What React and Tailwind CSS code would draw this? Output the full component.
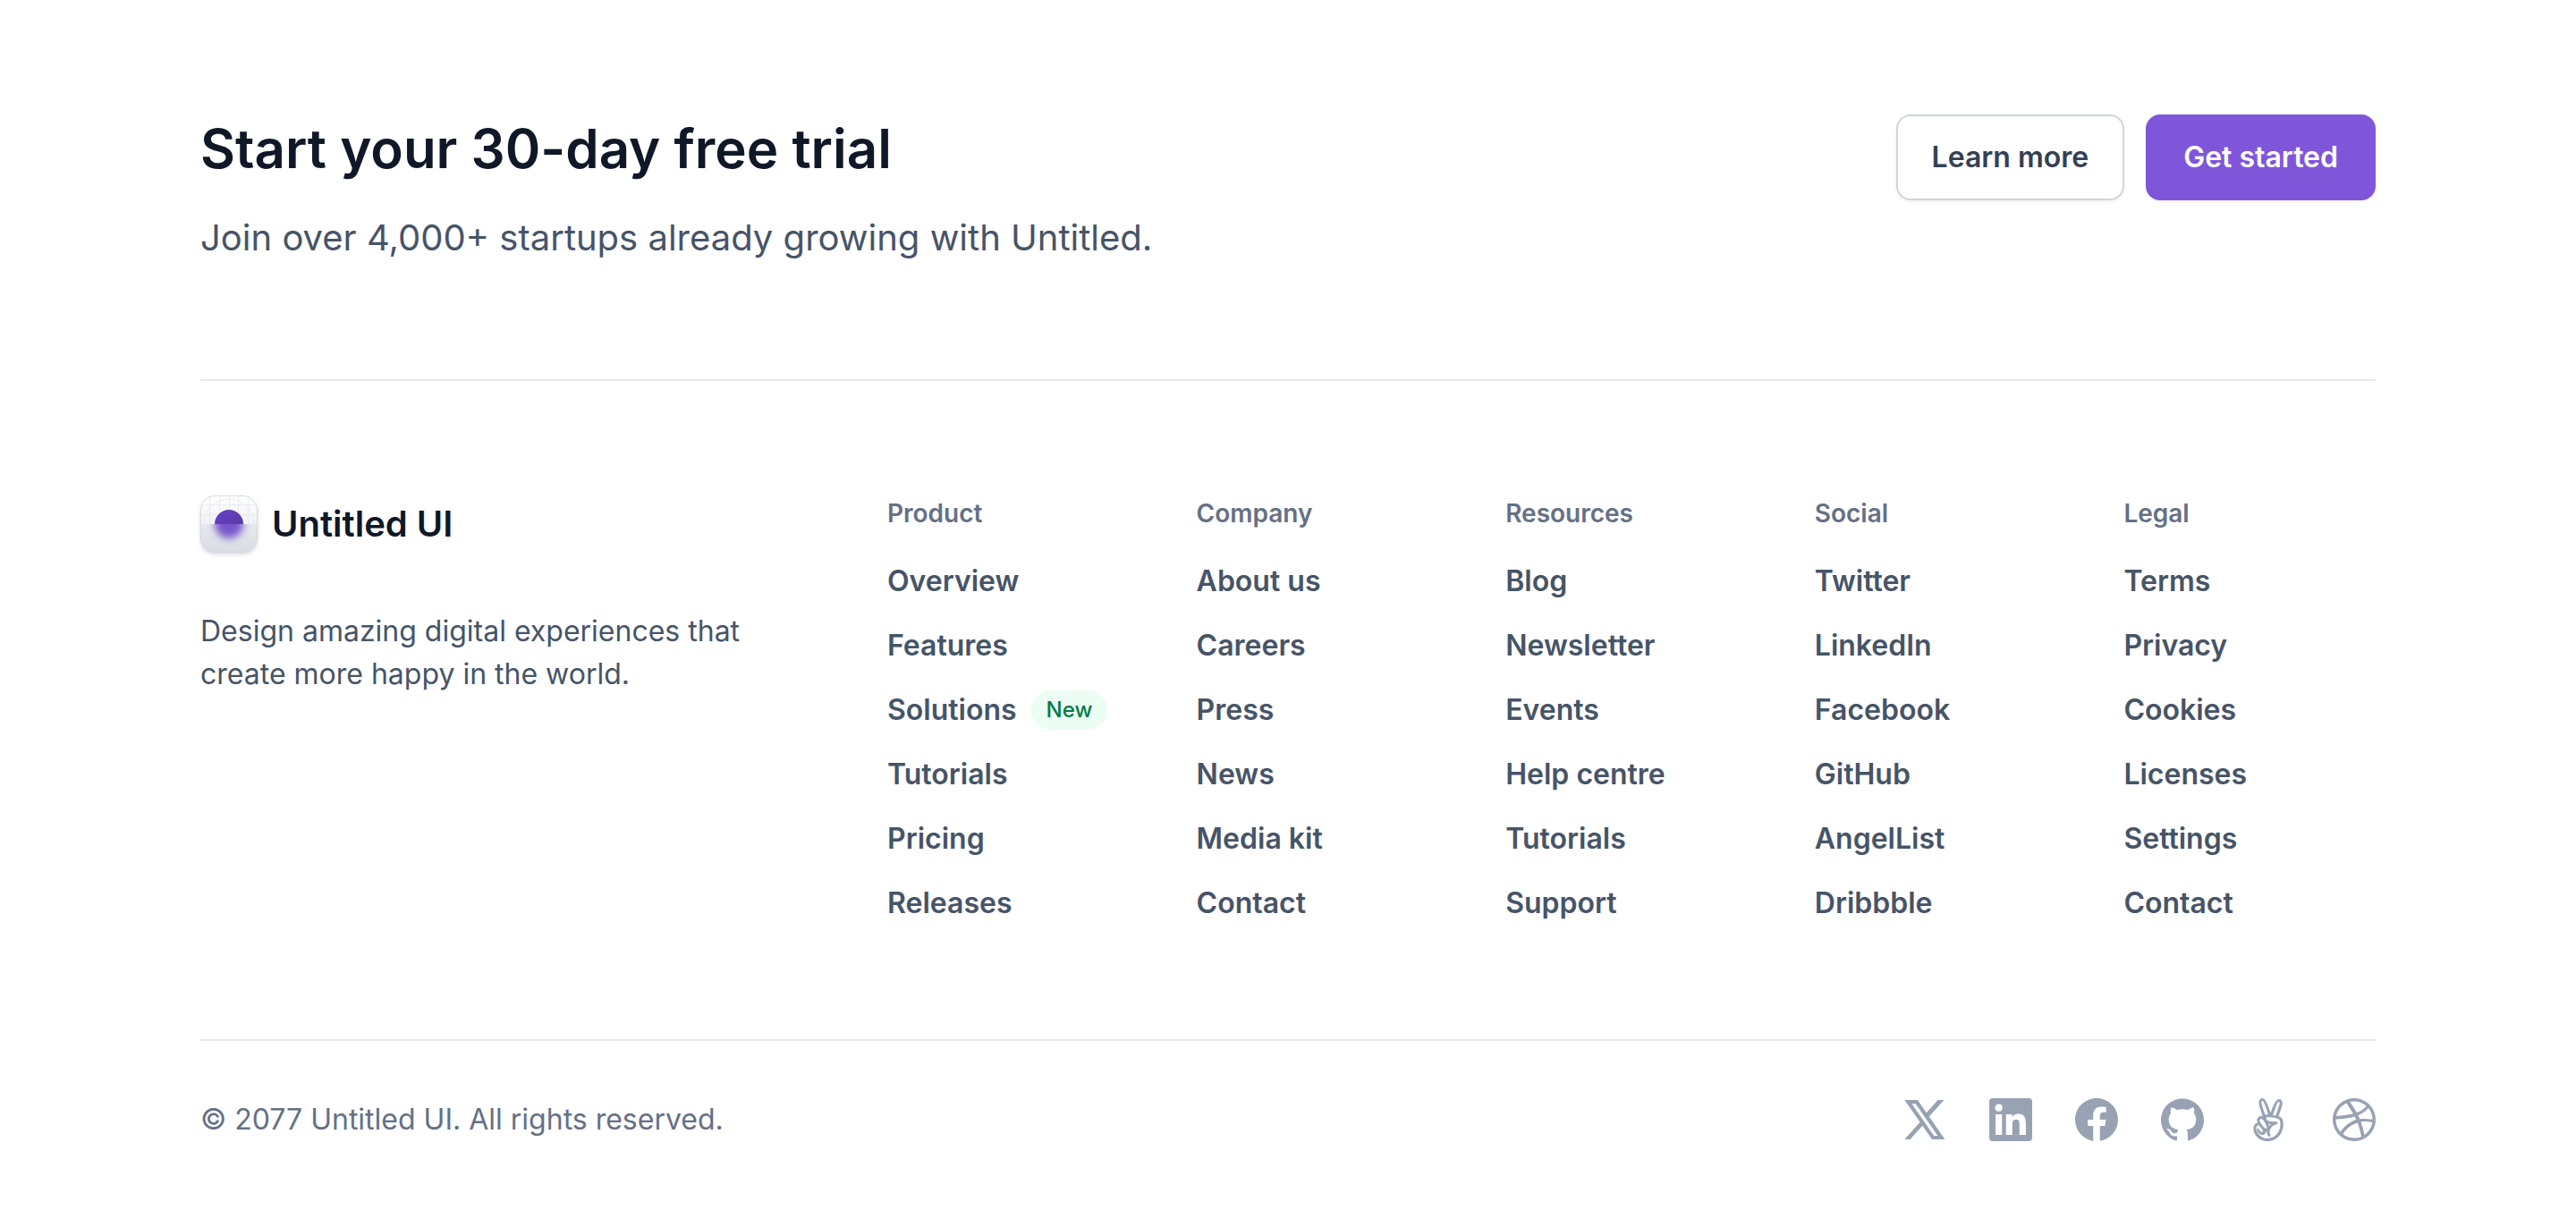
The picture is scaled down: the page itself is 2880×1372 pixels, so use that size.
import { FaAngellist } from "react-icons/fa";
import { SiGithub, SiDribbble } from "react-icons/si";

const columns = [
  { title: "Product", links: ["Overview", "Features", "Solutions", "Tutorials", "Pricing", "Releases"] },
  { title: "Company", links: ["About us", "Careers", "Press", "News", "Media kit", "Contact"] },
  { title: "Resources", links: ["Blog", "Newsletter", "Events", "Help centre", "Tutorials", "Support"] },
  { title: "Social", links: ["Twitter", "LinkedIn", "Facebook", "GitHub", "AngelList", "Dribbble"] },
  { title: "Legal", links: ["Terms", "Privacy", "Cookies", "Licenses", "Settings", "Contact"] },
];

function XIcon(props) {
  return (
    <svg viewBox="0 0 24 24" fill="currentColor" {...props}>
      <path
        fillRule="evenodd"
        d="M.67 1H8l4.9 7.15L19.3 1h3.4l-8.3 9.3L23.2 23H16l-5.35-7.67L3.8 23H.67l8.61-9.64ZM4.75 3.1 17.1 21h2.1L6.8 3.1Z"
      />
    </svg>
  );
}

function LinkedInIcon(props) {
  return (
    <svg viewBox="0 0 24 24" fill="currentColor" {...props}>
      <path d="M22.223 0H1.772C.792 0 0 .773 0 1.73v20.536C0 23.222.792 24 1.772 24h20.451c.98 0 1.777-.778 1.777-1.73V1.73C24 .773 23.203 0 22.223 0zM7.12 20.452H3.558V8.995H7.12v11.457zM5.34 7.434a2.064 2.064 0 1 1 0-4.125 2.063 2.063 0 0 1 0 4.125zm15.112 13.018h-3.558v-5.57c0-1.326-.024-3.037-1.852-3.037-1.851 0-2.133 1.449-2.133 2.944v5.663H9.356V8.995h3.413v1.566h.047c.473-.9 1.636-1.852 3.365-1.852 3.605 0 4.27 2.371 4.27 5.456v6.287z" />
    </svg>
  );
}

function FacebookIcon(props) {
  return (
    <svg viewBox="0 0 24 24" fill="currentColor" {...props}>
      <path d="M24 12c0-6.627-5.373-12-12-12S0 5.373 0 12c0 5.99 4.388 10.954 10.125 11.854v-8.385H7.078V12h3.047V9.356c0-3.007 1.792-4.668 4.533-4.668 1.312 0 2.686.234 2.686.234v2.953H15.83c-1.491 0-1.956.925-1.956 1.875V12h3.328l-.532 3.469h-2.796v8.385C19.612 22.954 24 17.99 24 12z" />
    </svg>
  );
}

const socials = [
  { name: "X", Icon: XIcon },
  { name: "LinkedIn", Icon: LinkedInIcon },
  { name: "Facebook", Icon: FacebookIcon },
  { name: "GitHub", Icon: SiGithub },
  { name: "AngelList", Icon: FaAngellist },
  { name: "Dribbble", Icon: SiDribbble },
];

function LogoMark() {
  return (
    <svg viewBox="0 0 64 64" className="size-16 shrink-0 overflow-visible" aria-hidden="true">
      <defs>
        <linearGradient id="tile" x1="0" y1="0" x2="0" y2="1">
          <stop offset="0" stopColor="#ffffff" />
          <stop offset="1" stopColor="#d0d5dd" />
        </linearGradient>
        <linearGradient id="dot" x1="0" y1="0" x2="1" y2="1">
          <stop offset="0" stopColor="#6941c6" />
          <stop offset="1" stopColor="#53389e" />
        </linearGradient>
        <clipPath id="upper"><rect width="64" height="32" /></clipPath>
        <clipPath id="lower"><path d="M0 32H64V48A16 16 0 0 1 48 64H16A16 16 0 0 1 0 48Z" /></clipPath>
        <filter id="soft" x="-50%" y="-50%" width="200%" height="200%"><feGaussianBlur stdDeviation="4" /></filter>
        <filter id="shadow" x="-20%" y="-20%" width="140%" height="150%">
          <feDropShadow dx="0" dy="2" stdDeviation="2" floodColor="#101828" floodOpacity="0.14" />
        </filter>
      </defs>
      <rect width="64" height="64" rx="16" fill="url(#tile)" filter="url(#shadow)" />
      <g clipPath="url(#upper)">
        <path d="M0 32V16A16 16 0 0 1 16 0H48A16 16 0 0 1 64 16V32Z" fill="#ffffff" fillOpacity="0.4" />
        <g fill="none" stroke="#d0d5dd" strokeOpacity="0.35">
          <path d="M10.5 2V32M21.5 0V32M32.5 0V32M42.5 0V32M53.5 2V32M1 10.5H63M0 21.5H64" />
          <circle cx="32" cy="32" r="28" />
        </g>
      </g>
      <circle cx="32" cy="32" r="16" fill="url(#dot)" clipPath="url(#upper)" />
      <g clipPath="url(#lower)">
        <path d="M0 32H64V64H0Z" fill="#e4e7ec" fillOpacity="0.5" />
        <circle cx="32" cy="32" r="16" fill="#6941c6" fillOpacity="0.88" filter="url(#soft)" />
      </g>
      <rect x="0.5" y="0.5" width="63" height="63" rx="15.5" fill="none" stroke="#d0d5dd" strokeOpacity="0.8" />
    </svg>
  );
}

export default function App() {
  return (
    <footer className="mx-auto max-w-[2560px] bg-white px-16 pt-32 pb-24 font-['Inter',sans-serif]">
      <section className="flex items-start justify-between gap-16 border-b-2 border-[#e4e7ec] pb-32">
        <div>
          <h2 className="text-[60px] leading-[76px] font-semibold text-[#101828]">Start your 30-day free trial</h2>
          <p className="mt-8 text-[40px] leading-[60px] text-[#475467]">
            Join over 4,000+ startups already growing with Untitled.
          </p>
        </div>
        <div className="flex shrink-0 gap-6 text-[32px] leading-[44px] font-semibold">
          <button type="button" className="rounded-2xl border-2 border-[#d0d5dd] bg-white px-[38px] py-6 text-[#344054] shadow-[0_2px_4px_rgba(16,24,40,0.05)]">
            Learn more
          </button>
          <button type="button" className="rounded-2xl border-2 border-[#7f56d9] bg-[#7f56d9] px-10 py-6 text-white shadow-[0_2px_4px_rgba(16,24,40,0.05)]">
            Get started
          </button>
        </div>
      </section>

      <div className="flex gap-32 py-32">
        <div className="w-[640px] shrink-0">
          <a href="#" className="flex items-center gap-4">
            <LogoMark />
            <span className="text-[40px] leading-[60px] font-semibold text-[#101828]">Untitled UI</span>
          </a>
          <p className="mt-16 text-[32px] leading-[48px] text-[#475467]">
            Design amazing digital experiences that create more happy in the world.
          </p>
        </div>
        <nav className="grid flex-1 grid-cols-5 gap-16" aria-label="Footer">
          {columns.map((col) => (
            <div key={col.title}>
              <h3 className="text-[28px] leading-[40px] font-semibold text-[#667085]">{col.title}</h3>
              <ul className="mt-8 flex flex-col gap-6">
                {col.links.map((link) => (
                  <li key={link} className="flex h-12 items-center gap-4 whitespace-nowrap">
                    <a href="#" className="text-[32px] leading-[48px] font-semibold text-[#475467]">{link}</a>
                    {link === "Solutions" && (
                      <span className="rounded-full bg-[#ecfdf3] px-[17px] py-1 text-[24px] leading-[36px] font-medium text-[#027a48]">New</span>
                    )}
                  </li>
                ))}
              </ul>
            </div>
          ))}
        </nav>
      </div>

      <div className="flex items-center justify-between border-t-2 border-[#e4e7ec] pt-16">
        <p className="text-[32px] leading-[48px] text-[#667085]">© 2077 Untitled UI. All rights reserved.</p>
        <ul className="flex gap-12 text-[#98a2b3]">
          {socials.map(({ name, Icon }) => (
            <li key={name}>
              <a href="#" aria-label={name} className="block">
                <Icon className="size-12" />
              </a>
            </li>
          ))}
        </ul>
      </div>
    </footer>
  );
}
